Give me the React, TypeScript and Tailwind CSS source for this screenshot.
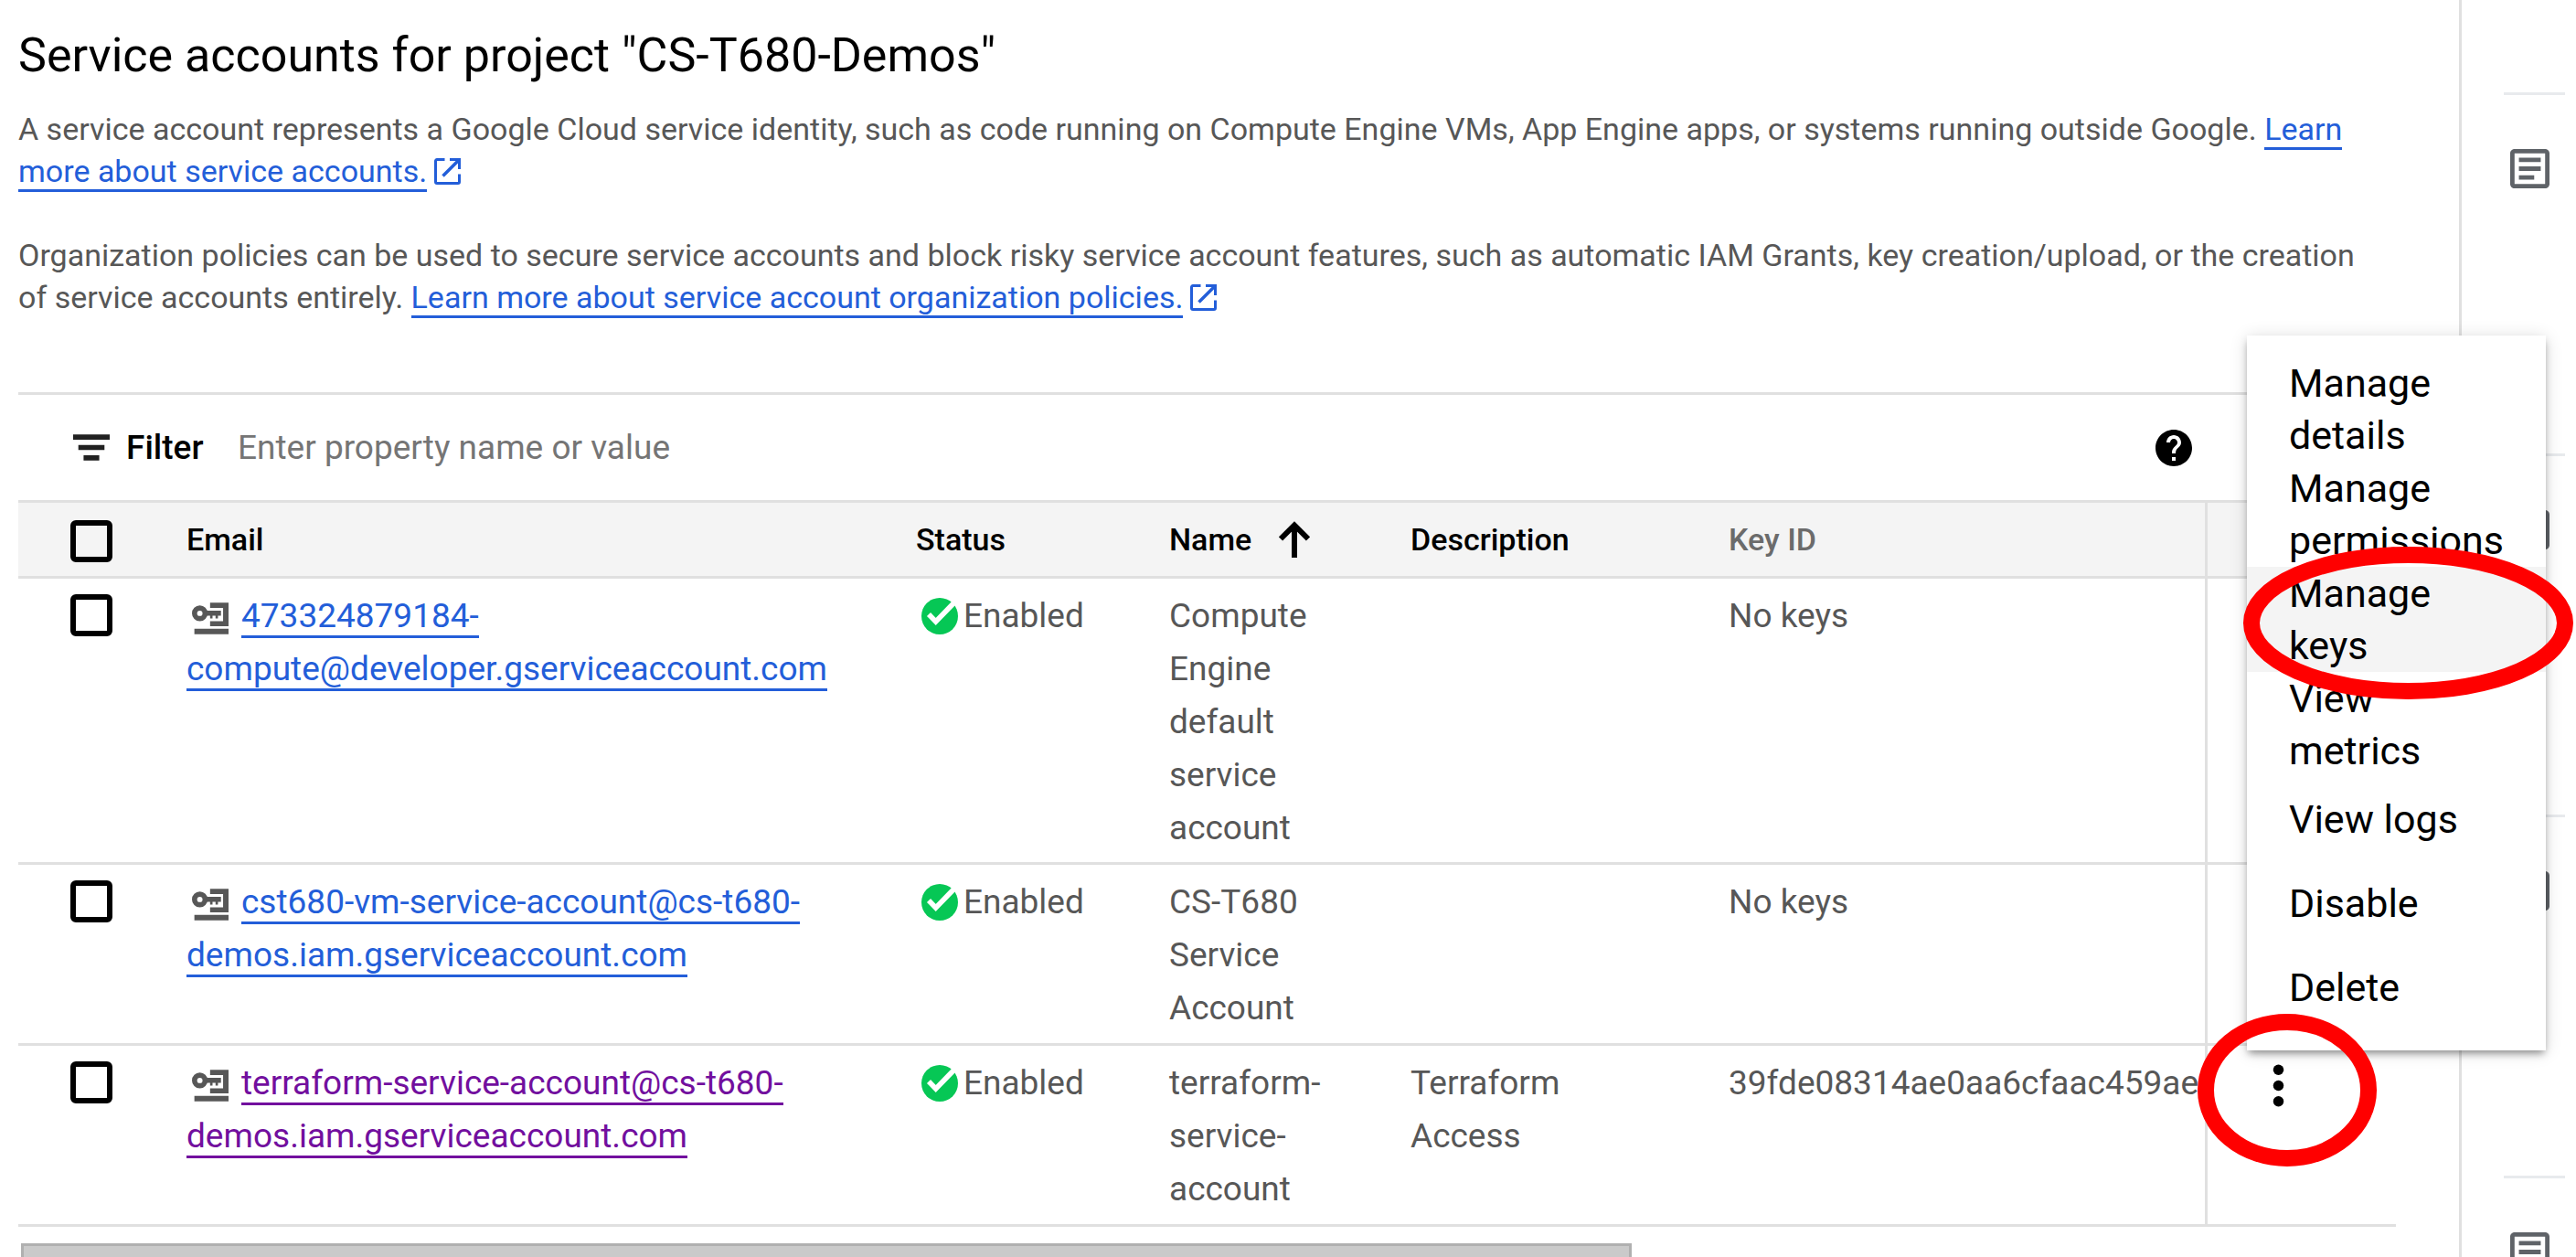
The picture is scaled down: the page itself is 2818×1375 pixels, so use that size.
import React from "react";

type Account = {
  id: string;
  email: string;
  visited?: boolean;
  name: string;
  description: string;
  keyId: string;
};

const accounts: Account[] = [
  {
    id: "compute",
    email: "473324879184-compute@developer.gserviceaccount.com",
    name: "Compute Engine default service account",
    description: "",
    keyId: "No keys",
  },
  {
    id: "cst680",
    email: "cst680-vm-service-account@cs-t680-demos.iam.gserviceaccount.com",
    name: "CS-T680 Service Account",
    description: "",
    keyId: "No keys",
  },
  {
    id: "terraform",
    email: "terraform-service-account@cs-t680-demos.iam.gserviceaccount.com",
    visited: true,
    name: "terraform-service-account",
    description: "Terraform Access",
    keyId: "39fde08314ae0aa6cfaac459ae",
  },
];

const menuItems = [
  { label: "Manage details", tall: true },
  { label: "Manage permissions", tall: true },
  { label: "Manage keys", tall: true, active: true },
  { label: "View metrics", tall: true },
  { label: "View logs" },
  { label: "Disable" },
  { label: "Delete" },
];

function ExternalIcon() {
  return (
    <svg viewBox="0 0 29 29" className="ml-2 inline size-[29px] align-[-3px]" fill="none" stroke="currentColor" strokeWidth="3" aria-hidden="true">
      <path d="M11.5 1.5H3A1.5 1.5 0 0 0 1.5 3v23A1.5 1.5 0 0 0 3 27.5h23a1.5 1.5 0 0 0 1.5-1.5v-8.5" />
      <path d="M17 1.5h10.5V12" />
      <path d="M9.5 19.5L26.5 2.5" strokeWidth="3.6" />
    </svg>
  );
}

function KeyIcon() {
  return (
    <svg viewBox="0 0 121 104" className="mr-[14px] ml-[6px] inline h-[35px] w-10 align-middle text-[#575757]" fill="currentColor" aria-hidden="true">
      <circle cx="26" cy="35" r="17.5" fill="none" stroke="currentColor" strokeWidth="17" />
      <path d="M46 26h50v17h-10v9h-8v-9h-10v9h-8v-9H46z" />
      <path d="M60 0h61v78H60V61h43V17H60z" />
      <path d="M8 86h113v18H8z" />
    </svg>
  );
}

function CheckCircle() {
  return (
    <svg viewBox="0 0 40 40" className="size-10 shrink-0" aria-hidden="true">
      <circle cx="20" cy="20" r="20" fill="#06c755" />
      <path d="M8 18l7.7 8L39 1.9" fill="none" stroke="#fff" strokeWidth="5.6" />
    </svg>
  );
}

function ArticleIcon() {
  return (
    <svg viewBox="3 3 18 18" className="ml-[7px] size-[43px]" fill="#5f6368" aria-hidden="true">
      <path d="M19 5v14H5V5h14m0-2H5c-1.1 0-2 .9-2 2v14c0 1.1.9 2 2 2h14c1.1 0 2-.9 2-2V5c0-1.1-.9-2-2-2z" />
      <path d="M14 17H7v-2h7v2zm3-4H7v-2h10v2zm0-4H7V7h10v2z" />
    </svg>
  );
}

function Checkbox({ label }: { label: string }) {
  return (
    <input
      type="checkbox"
      aria-label={label}
      className="ml-[57px] block size-[46px] appearance-none rounded-[6px] border-[6px] border-black checked:bg-black"
    />
  );
}

function DocLink({ children }: { children: React.ReactNode }) {
  return (
    <a href="#docs" className="border-b-[3px] border-[#235ed9] text-[#235ed9]">
      {children}
    </a>
  );
}

function ActionsMenu() {
  return (
    <ul className="absolute bottom-full left-0 z-20 mb-1 w-[327px] bg-white py-[23px] shadow-[0_5px_8px_-2px_rgba(0,0,0,0.4),0_2px_18px_rgba(0,0,0,0.14)]">
      {menuItems.map((item) => (
        <li key={item.label} className={item.active ? "relative z-10 bg-[#f4f4f4]" : ""}>
          <button
            className={
              item.tall
                ? "block h-[115px] w-full pr-20 pl-[46px] text-left text-[43px] leading-[57px] whitespace-normal text-black"
                : "block h-[92px] w-full pl-[46px] text-left text-[43px] leading-[57px] text-black"
            }
          >
            {item.label}
          </button>
          {item.active && (
            <svg viewBox="0 0 361 167" className="pointer-events-none absolute -top-[22px] -left-1 h-[167px] w-[361px]" aria-hidden="true">
              <ellipse cx="180.5" cy="83.5" rx="171.5" ry="74.5" fill="none" stroke="#ff0000" strokeWidth="18" />
            </svg>
          )}
        </li>
      ))}
    </ul>
  );
}

function RowActions() {
  return (
    <div className="relative ml-[43px] w-fit">
      <button aria-label="Actions" className="block">
        <svg viewBox="0 0 24 24" className="size-[69px]" fill="#000" aria-hidden="true">
          <circle cx="12" cy="6" r="2" />
          <circle cx="12" cy="12" r="2" />
          <circle cx="12" cy="18" r="2" />
        </svg>
      </button>
      <ActionsMenu />
      <svg viewBox="0 0 196 167" className="pointer-events-none absolute -top-11 -left-[54px] z-30 h-[167px] w-[196px]" aria-hidden="true">
        <ellipse cx="98" cy="83.5" rx="89" ry="74.5" fill="none" stroke="#ff0000" strokeWidth="18" />
      </svg>
    </div>
  );
}

const th = "h-[83px] border-b-[3px] border-[#e0e0e0] bg-[#f4f4f4] p-0 text-left align-middle text-[34px] leading-[46px] font-medium text-black";
const td = "h-[198px] border-b-[3px] border-[#e0e0e0] px-0 pt-3 pb-2 align-top";
const tdActions = "h-[198px] border-b-[3px] border-l-[3px] border-[#e0e0e0] p-0 pt-[9px] align-top";

export default function App() {
  return (
    <div className="flex h-screen overflow-hidden bg-white font-['Roboto',sans-serif]">
      <main className="min-w-0 flex-1 pt-[31px] pr-[69px] pl-5">
        <h1 className="text-[52px] leading-[60px] text-black">Service accounts for project "CS-T680-Demos"</h1>
        <p className="mt-[27px] pr-5 text-[34px] leading-[46px] text-[#575757]">
          A service account represents a Google Cloud service identity, such as code running on Compute Engine VMs, App
          Engine apps, or systems running outside Google. <DocLink>Learn more about service accounts.</DocLink>
          <span className="text-[#235ed9]"><ExternalIcon /></span>
        </p>
        <p className="mt-[46px] pr-5 text-[34px] leading-[46px] text-[#575757]">
          Organization policies can be used to secure service accounts and block risky service account features, such as
          automatic IAM Grants, key creation/upload, or the creation of service accounts entirely.{" "}
          <DocLink>Learn more about service account organization policies.</DocLink>
          <span className="text-[#235ed9]"><ExternalIcon /></span>
        </p>

        <section className="mt-[81px]">
          <div className="flex h-[121px] items-center border-y-[3px] border-[#e0e0e0] pr-[223px] pl-[60px] text-[37px]">
            <svg viewBox="0 0 14 10" className="h-[29px] w-10" fill="#212121" aria-hidden="true">
              <path d="M0 0h14v2H0zM2 4h10v2H2zM4 8h6v2H4z" />
            </svg>
            <label htmlFor="filter" className="ml-[18px] w-[122px] font-medium text-black">
              Filter
            </label>
            <input
              id="filter"
              placeholder="Enter property name or value"
              className="min-w-0 flex-1 outline-none placeholder:text-[#757575] placeholder:opacity-100"
            />
            <button aria-label="Help">
              <svg viewBox="2 2 20 20" className="size-10" fill="#000" aria-hidden="true">
                <path d="M12 2C6.48 2 2 6.48 2 12s4.48 10 10 10 10-4.480 10-10S17.520 2 12 2zm1 17h-2v-2h2v2zm2.070-7.750l-.9.920C13.450 12.900 13 13.500 13 15h-2v-.5c0-1.100.45-2.100 1.170-2.830l1.240-1.260c.37-.36.59-.86.59-1.410 0-1.100-.9-2-2-2s-2 .9-2 2H8c0-2.210 1.790-4 4-4s4 1.790 4 4c0 .88-.36 1.680-.93 2.250z" />
              </svg>
            </button>
          </div>

          <table className="w-full table-fixed border-separate border-spacing-0 text-[37px] leading-[58px] text-[#575757]">
            <colgroup>
              <col className="w-[184px]" />
              <col className="w-[798px]" />
              <col className="w-[277px]" />
              <col className="w-[264px]" />
              <col className="w-[348px]" />
              <col />
              <col className="w-[209px]" />
            </colgroup>
            <thead>
              <tr>
                <th className={th}>
                  <div className="pt-1">
                    <Checkbox label="Select all" />
                  </div>
                </th>
                <th className={th}>Email</th>
                <th className={th}>Status</th>
                <th className={th}>
                  <button className="flex items-center font-medium">
                    Name
                    <svg viewBox="0 0 34 40" className="ml-[30px] h-10 w-[34px]" fill="none" stroke="#000" strokeWidth="6" aria-hidden="true">
                      <path d="M17 40V5M2 19.500L17 4.500l15 15" />
                    </svg>
                  </button>
                </th>
                <th className={th}>Description</th>
                <th className={th}>
                  <span className="text-[#6b6b6b]">Key ID</span>
                </th>
                <th className={`${th} border-l-[3px]`} aria-label="Actions" />
              </tr>
            </thead>
            <tbody>
              {accounts.map((a) => (
                <tr key={a.id}>
                  <td className={td}>
                    <div className="pt-[5px]">
                      <Checkbox label={`Select ${a.email}`} />
                    </div>
                  </td>
                  <td className={`${td} pr-20`}>
                    <KeyIcon />
                    <a
                      href={`#${a.id}`}
                      className={
                        a.visited
                          ? "border-b-[3px] border-[#720f9e] text-[#720f9e]"
                          : "border-b-[3px] border-[#235ed9] text-[#235ed9]"
                      }
                    >
                      {a.email}
                    </a>
                  </td>
                  <td className={td}>
                    <div className="ml-[6px] flex items-center gap-[6px]">
                      <CheckCircle />
                      Enabled
                    </div>
                  </td>
                  <td className={td}>
                    <div className="pr-16">{a.name}</div>
                  </td>
                  <td className={td}>
                    <div className="pr-24">{a.description}</div>
                  </td>
                  <td className={td}>
                    <div className="overflow-hidden whitespace-nowrap">{a.keyId}</div>
                  </td>
                  <td className={tdActions}>{a.id === "terraform" && <RowActions />}</td>
                </tr>
              ))}
            </tbody>
          </table>
          <div className="mt-[18px] ml-[3px] h-[23px] w-[1762px] max-w-full border-[3px] border-[#b0b0b0] bg-[#cacaca]" />
        </section>
      </main>

      <aside className="w-32 shrink-0 border-l-[3px] border-[#e0e0e0] pt-[101px] pr-3 pl-[46px]">
        {[0, 1, 2, 3].map((i) => (
          <div key={i} className="h-[395px]">
            <div className="mb-[59px] h-[3px] bg-[#e8eaed]" />
            <ArticleIcon />
          </div>
        ))}
      </aside>
    </div>
  );
}
